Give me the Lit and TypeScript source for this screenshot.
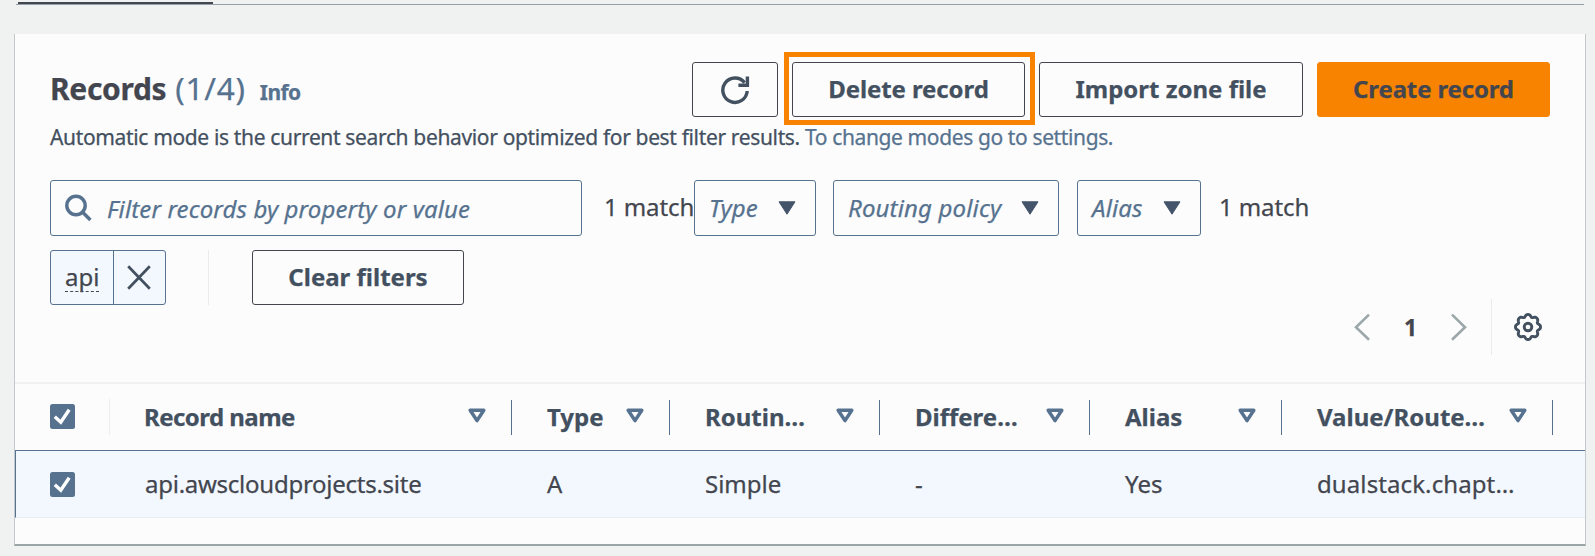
import { LitElement, html, css } from "lit";
import { customElement } from "lit/decorators.js";

interface Column {
  key: string;
  label: string;
  value: string;
}

const COLUMNS: Column[] = [
  { key: "name", label: "Record name", value: "api.awscloudprojects.site" },
  { key: "kind", label: "Type", value: "A" },
  { key: "policy", label: "Routin…", value: "Simple" },
  { key: "differ", label: "Differe…", value: "-" },
  { key: "aliased", label: "Alias", value: "Yes" },
  { key: "target", label: "Value/Route…", value: "dualstack.chapt…" },
];

// Outline of the settings gear: eight broad teeth with narrow notches between them.
const gearPath = (() => {
  const points: string[] = [];
  for (let i = 0; i < 128; i++) {
    const a = (i / 128) * Math.PI * 2;
    const r = 12.5 - 2.3 * Math.pow((1 - Math.cos(8 * a)) / 2, 1.5);
    points.push(`${(14 + r * Math.sin(a)).toFixed(2)} ${(14 - r * Math.cos(a)).toFixed(2)}`);
  }
  return `M${points.join("L")}Z`;
})();

const caret = html`<svg class="caret" width="18" height="14" viewBox="0 0 18 14">
  <path d="M1 .8H17L9 13.2Z" fill="#44546a" stroke="#44546a" stroke-width="1" stroke-linejoin="round" />
</svg>`;

const sortIcon = html`<svg class="sort" width="18" height="15" viewBox="0 0 18 15">
  <path d="M2.2 2.2H15.8L9 12.6Z" fill="none" stroke="#56728f" stroke-width="3.5" stroke-linejoin="round" />
</svg>`;

const checkbox = html`<svg width="25" height="25" viewBox="0 0 25 25">
  <rect width="25" height="25" rx="2.5" fill="#56728f" />
  <path d="M4.8 12.8L10.8 18.2L19.2 5.8" fill="none" stroke="#fff" stroke-width="3.4" />
</svg>`;

@customElement("app-root")
export class AppRoot extends LitElement {
  static styles = css`
    :host {
      display: block;
      box-sizing: border-box;
      height: 556px;
      overflow: hidden;
      background: #f0f2f2;
      color: #43464f;
      font-family: "Noto Sans", "Open Sans", sans-serif;
      font-size: 24px;
      line-height: 32px;
      white-space: nowrap;
      -webkit-text-stroke: 0.25px;
    }
    * { box-sizing: border-box; }
    svg { display: block; flex: none; }
    .tabs {
      height: 5px;
      margin: 0 11px 29px 16px;
      padding: 2px 0 0 2px;
      border-bottom: 1px solid #949fa7;
    }
    .tab { width: 195px; height: 2px; background: #43464f; }
    .panel {
      margin: 0 9px 0 14px;
      height: 512px;
      background: #fcfcfc;
      border: 1px solid #c3c9cc;
      border-top: 0;
      border-bottom: 2px solid #99a5a6;
    }
    .header {
      display: flex;
      justify-content: space-between;
      height: 83px;
      padding: 28px 35px 0 35px;
    }
    .title { display: flex; align-items: baseline; height: 52px; line-height: 52px; }
    .title-text { font-size: 30px; font-weight: 700; letter-spacing: -0.35px; }
    .count { margin-left: 9px; font-size: 31.5px; color: #56728f; letter-spacing: 0.8px; }
    .info { margin-left: 14px; font-size: 21px; font-weight: 700; color: #56728f; letter-spacing: -0.6px; }
    .actions { display: flex; gap: 14px; height: 55px; }
    .btn {
      position: relative;
      display: flex;
      align-items: center;
      justify-content: center;
      height: 55px;
      padding-bottom: 2px;
      border: 1px solid #43464f;
      border-radius: 3px;
      color: #435060;
      font-weight: 700;
    }
    .refresh { width: 86px; padding: 0; }
    .delete { width: 233px; letter-spacing: -0.1px; }
    .import { width: 264px; }
    .create { width: 233px; background: #f88300; border-color: #f88300; color: #43464f; letter-spacing: -0.15px; }
    .clear { width: 212px; letter-spacing: 0; }
    .highlight { position: absolute; inset: -11px -11px -9px -9px; border: 5px solid #f88300; }
    .description {
      height: 40px;
      padding-left: 35px;
      font-size: 21px;
      line-height: 40px;
      letter-spacing: -0.35px;
      color: #435060;
    }
    .link { color: #56728f; letter-spacing: -0.38px; }
    .filters { display: flex; height: 56px; margin-top: 23px; padding-left: 35px; line-height: 54px; }
    .field {
      display: flex;
      align-items: center;
      border: 1px solid #56728f;
      border-radius: 3px;
      color: #56728f;
      font-style: italic;
    }
    .search { width: 532px; padding-left: 14px; letter-spacing: 0.12px; }
    .search-label { margin: 1px 0 0 15px; }
    .select { justify-content: space-between; padding: 0 19px 0 14px; }
    .select .caret { margin-top: -1px; }
    .select-type { width: 122px; }
    .select-routing { width: 226px; margin-left: 17px; letter-spacing: 0.15px; }
    .select-alias { width: 124px; margin-left: 18px; letter-spacing: 0.15px; }
    .match { letter-spacing: -0.1px; }
    .match.first { width: 112px; padding-left: 22px; }
    .match.last { margin-left: 18px; line-height: 54px; }
    .tokens { display: flex; height: 55px; margin-top: 14px; padding-left: 35px; }
    .token {
      display: flex;
      width: 116px;
      background: #f2f8fe;
      border: 1px solid #56728f;
      border-radius: 3px;
    }
    .token-label { display: flex; width: 63px; padding: 7px 0 0 14px; border-right: 1px solid #56728f; }
    .token-text { height: 34px; line-height: 37px; border-bottom: 1px dashed #43464f; }
    .token-close { display: flex; flex: 1; align-items: center; justify-content: center; padding-right: 2px; }
    .separator { width: 1px; margin: 0 43px 0 42px; background: #e9ecec; }
    .pagination {
      display: flex;
      align-items: center;
      justify-content: flex-end;
      height: 56px;
      margin-top: -6px;
      padding-right: 43px;
    }
    .page { width: 81px; text-align: center; font-weight: 700; font-size: 23px; }
    .page-divider { width: 1px; height: 56px; margin: 0 22px 0 24px; background: #eaecec; }
    .row { display: grid; grid-template-columns: 95px 402px 158px 210px 210px 192px 271px 1fr; }
    .head {
      height: 68px;
      margin-top: 27px;
      border-top: 2px solid #f0f1f1;
      color: #435060;
      font-weight: 700;
      align-items: center;
    }
    .body {
      height: 68px;
      background: #f2f8fe;
      border-top: 1px solid #56728f;
      border-left: 1px solid #56728f;
      border-bottom: 1px solid #e9eef0;
      align-items: center;
    }
    .check { display: flex; align-items: center; height: 36px; padding-left: 35px; }
    .head .check { padding-bottom: 2px; border-right: 1px solid #eceeee; }
    .body .check { padding-left: 34px; }
    .cell { display: flex; align-items: center; height: 35px; padding-left: 35px; }
    .head .cell { justify-content: space-between; padding-right: 25px; border-right: 1px solid #56728f; }
    .sort { margin-top: -3px; }
    .body .cell { padding-left: 34px; }
    .head .cell.name { letter-spacing: -0.55px; padding-left: 34px; }
    .body .cell.name { letter-spacing: -0.26px; }
    .body .cell.target { letter-spacing: 0.1px; }
  `;

  render() {
    return html`
      <div class="tabs"><div class="tab"></div></div>
      <section class="panel">
        <header class="header">
          <div class="title">
            <span class="title-text">Records</span>
            <span class="count">(1/4)</span>
            <span class="info">Info</span>
          </div>
          <div class="actions">
            <div class="btn refresh">
              <svg width="30" height="30" viewBox="0 0 30 30" fill="none" stroke="#435060" stroke-width="3.4">
                <path d="M27.2 16A12.2 12.2 0 1 1 24.6 7.6" />
                <path d="M27.4 1.4V10.2H18.4" />
              </svg>
            </div>
            <div class="btn delete">Delete record<div class="highlight"></div></div>
            <div class="btn import">Import zone file</div>
            <div class="btn create">Create record</div>
          </div>
        </header>
        <div class="description">
          Automatic mode is the current search behavior optimized for best filter results.
          <span class="link">To change modes go to settings.</span>
        </div>
        <div class="filters">
          <div class="field search">
            <svg width="27" height="28" viewBox="0 0 27 28" fill="none" stroke="#56728f" stroke-width="3.4">
              <circle cx="11" cy="11.5" r="9.2" />
              <path d="M17.4 18L25.4 26" />
            </svg>
            <span class="search-label">Filter records by property or value</span>
          </div>
          <div class="match first">1 match</div>
          <div class="field select select-type">Type ${caret}</div>
          <div class="field select select-routing">Routing policy ${caret}</div>
          <div class="field select select-alias">Alias ${caret}</div>
          <div class="match last">1 match</div>
        </div>
        <div class="tokens">
          <div class="token">
            <div class="token-label"><span class="token-text">api</span></div>
            <div class="token-close">
              <svg width="24" height="25" viewBox="0 0 24 25" fill="none" stroke="#435060" stroke-width="2.7">
                <path d="M1.2 1.2L22.8 23.8M22.8 1.2L1.2 23.8" />
              </svg>
            </div>
          </div>
          <div class="separator"></div>
          <div class="btn clear">Clear filters</div>
        </div>
        <div class="pagination">
          <svg width="16" height="28" viewBox="0 0 16 28" fill="none" stroke="#9ba7a9" stroke-width="2.6">
            <path d="M15 1.6L2 14.2L15 26.8" />
          </svg>
          <div class="page">1</div>
          <svg width="16" height="28" viewBox="0 0 16 28" fill="none" stroke="#9ba7a9" stroke-width="2.6">
            <path d="M1 1.6L14 14.2L1 26.8" />
          </svg>
          <div class="page-divider"></div>
          <svg width="28" height="28" viewBox="0 0 28 28" fill="none" stroke="#435060" stroke-width="2.9" stroke-linejoin="round">
            <path d=${gearPath} />
            <circle cx="14" cy="14" r="3.8" />
          </svg>
        </div>
        <div class="row head">
          <div class="check">${checkbox}</div>
          ${COLUMNS.map((c) => html`<div class="cell ${c.key}">${c.label}${sortIcon}</div>`)}
        </div>
        <div class="row body">
          <div class="check">${checkbox}</div>
          ${COLUMNS.map((c) => html`<div class="cell ${c.key}">${c.value}</div>`)}
        </div>
      </section>
    `;
  }
}
